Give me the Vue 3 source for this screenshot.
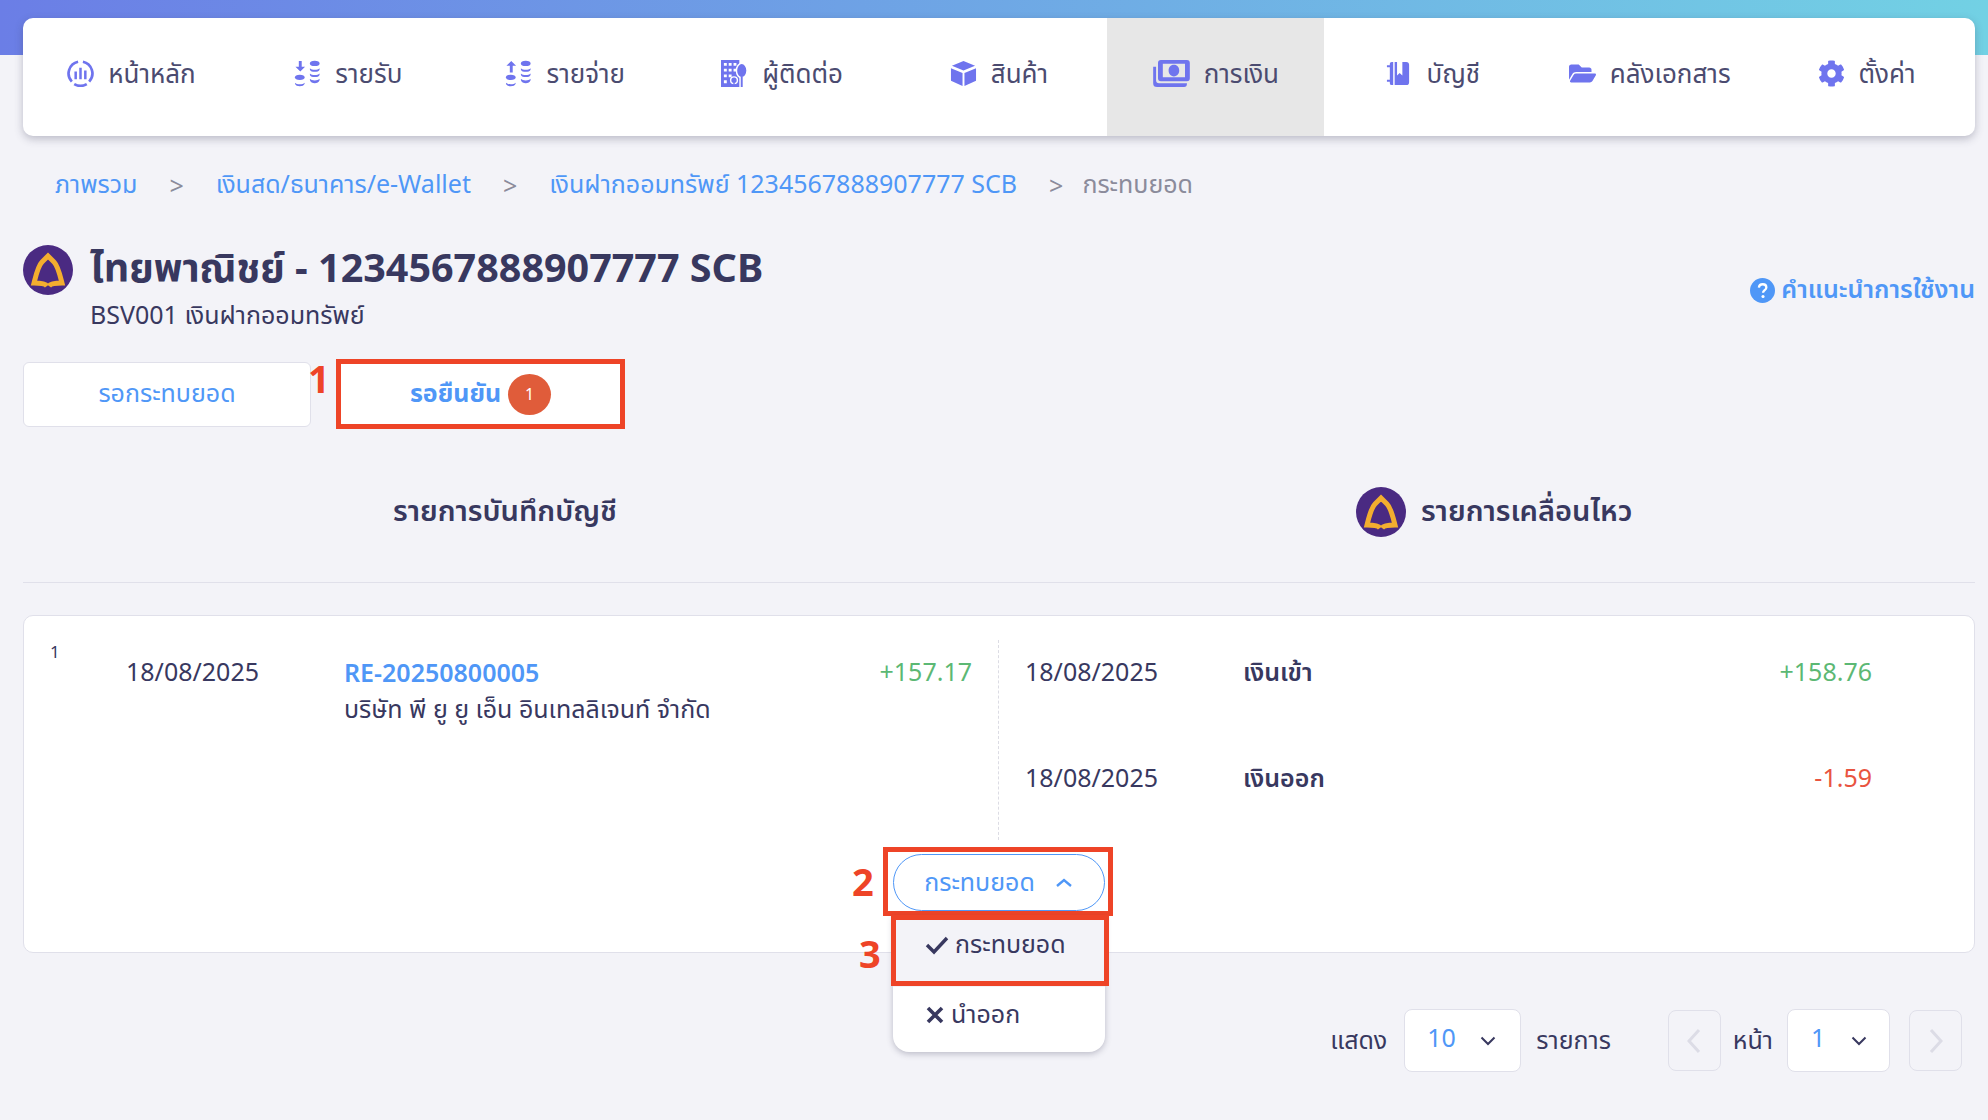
<script setup>
const menus = [
  { key: 'home', label: 'หน้าหลัก' },
  { key: 'income', label: 'รายรับ' },
  { key: 'expense', label: 'รายจ่าย' },
  { key: 'contact', label: 'ผู้ติดต่อ' },
  { key: 'product', label: 'สินค้า' },
  { key: 'finance', label: 'การเงิน', active: true },
  { key: 'account', label: 'บัญชี' },
  { key: 'docs', label: 'คลังเอกสาร' },
  { key: 'settings', label: 'ตั้งค่า' },
]

const crumbs = ['ภาพรวม', 'เงินสด/ธนาคาร/e-Wallet', 'เงินฝากออมทรัพย์ 1234567888907777 SCB']

const moves = [
  { date: '18/08/2025', label: 'เงินเข้า', amount: '+158.76', type: 'in' },
  { date: '18/08/2025', label: 'เงินออก', amount: '-1.59', type: 'out' },
]
</script>

<template>
  <div class="page">
    <!-- เมนูหลัก -->
    <nav class="nav">
      <a v-for="m in menus" :key="m.key" class="nav-item" :class="{ active: m.active }">
        <svg v-if="m.key === 'home'" class="nav-icon" viewBox="0 0 28 28" fill="none" stroke="#6f74ee">
          <path d="M5 22.500A12.500 12.500 0 0 1 11.500 1.800M16.500 1.800A12.500 12.500 0 0 1 23 22.500M7.500 25a13 13 0 0 0 13 0" stroke-width="2.800" />
          <path d="M9 12v8M14 8v12M19 11v9" stroke-width="2.600" />
        </svg>
        <svg v-else-if="m.key === 'income'" class="nav-icon" viewBox="0 0 28 28" fill="#6f74ee">
          <path d="M5 1h3v6h3.500L6.500 12 1.500 7H5z" />
          <ellipse cx="6" cy="18" rx="5" ry="2.800" />
          <path d="M1 23.500c2 2.200 8 2.200 10 0v1c-1 3.500-9 3.500-10 0z" />
          <ellipse cx="21.500" cy="3.500" rx="5" ry="2.800" />
          <path d="M16.500 8.500c2 2.200 8 2.200 10 0v1.500c-1 3-9 3-10 0zM16.500 14c2 2.200 8 2.200 10 0v1.500c-1 3-9 3-10 0zM16.500 19.500c2 2.200 8 2.200 10 0v1.500c-1 4-9 4-10 0z" />
        </svg>
        <svg v-else-if="m.key === 'expense'" class="nav-icon" viewBox="0 0 28 28" fill="#6f74ee">
          <path d="M5 13h3V6h3.500L6.500 1 1.500 6H5z" />
          <ellipse cx="6" cy="18" rx="5" ry="2.800" />
          <path d="M1 23.500c2 2.200 8 2.200 10 0v1c-1 3.500-9 3.500-10 0z" />
          <ellipse cx="21.500" cy="3.500" rx="5" ry="2.800" />
          <path d="M16.500 8.500c2 2.200 8 2.200 10 0v1.500c-1 3-9 3-10 0zM16.500 14c2 2.200 8 2.200 10 0v1.500c-1 3-9 3-10 0zM16.500 19.500c2 2.200 8 2.200 10 0v1.500c-1 4-9 4-10 0z" />
        </svg>
        <svg v-else-if="m.key === 'contact'" class="nav-icon" viewBox="0 0 28 28" fill="#6f74ee">
          <path fill-rule="evenodd" d="M0 0h19v28H0zM3 3v3h3V3zm5 0v3h3V3zm5 0v3h3V3zM3 9v3h3V9zm5 0v3h3V9zm5 0v3h3V9zM3 15v3h3v-3zm5 0v3h3v-3zM3 21v3h3v-3z" />
          <ellipse cx="21.500" cy="11" rx="5.500" ry="7.500" stroke="#fff" stroke-width="1.500" />
          <path d="M20.500 17h2v11h-2z" />
          <circle cx="13.500" cy="21" r="3.500" stroke="#fff" stroke-width="1.500" />
          <path d="M12.800 23h1.400v5h-1.400z" />
        </svg>
        <svg v-else-if="m.key === 'product'" class="nav-icon" viewBox="0 0 28 28" fill="#6f74ee">
          <path d="M14 1l12 5-12 5L2 6zM1 8.500l12 5V27L1 21.500zM27 8.500l-12 5V27l12-5.500z" />
        </svg>
        <svg v-else-if="m.key === 'finance'" class="nav-icon wide" viewBox="0 0 38 28" fill="#6f74ee">
          <path fill-rule="evenodd" d="M8 0h27a3 3 0 0 1 3 3v16a3 3 0 0 1-3 3H8a3 3 0 0 1-3-3V3a3 3 0 0 1 3-3zm2 4v14h23V4zm11.500 1c3.500 0 5.500 2.700 5.500 6s-2 6-5.500 6-5.500-2.700-5.500-6 2-6 5.500-6z" />
          <path d="M0 7h3v14a3 3 0 0 0 3 3h29v1a3 3 0 0 1-3 3H4a4 4 0 0 1-4-4z" />
        </svg>
        <svg v-else-if="m.key === 'account'" class="nav-icon" viewBox="-2 -2 28 28" fill="#6f74ee">
          <path fill-rule="evenodd" d="M8 0h12a3 3 0 0 1 3 3v18a3 3 0 0 1-3 3H8zm2.500 0v14l2.700-2.500L16 14V0z" />
          <path d="M6.500 0v24H5a2 2 0 0 1-2-2v-1.500H0v-2h3v-13H0v-2h3V2a2 2 0 0 1 2-2z" />
        </svg>
        <svg v-else-if="m.key === 'docs'" class="nav-icon" viewBox="0 0 576 512" fill="#6f74ee">
          <path d="M572.694 292.093L500.27 416.248A63.997 63.997 0 0 1 444.989 448H45.025c-18.523 0-30.064-20.093-20.731-36.093l72.424-124.155A64 64 0 0 1 152 256h399.964c18.523 0 30.064 20.093 20.73 36.093zM152 224h328v-48c0-26.51-21.49-48-48-48H272l-64-64H48C21.49 64 0 85.49 0 112v278.046l69.077-118.418C86.214 242.25 117.989 224 152 224z" />
        </svg>
        <svg v-else class="nav-icon" viewBox="0 0 512 512" fill="#6f74ee">
          <path d="M487.4 315.7l-42.6-24.6c4.3-23.2 4.3-47 0-70.2l42.6-24.6c4.9-2.8 7.1-8.6 5.5-14-11.1-35.6-30-67.8-54.7-94.6-3.8-4.1-10-5.1-14.8-2.3L380.8 110c-17.9-15.4-38.5-27.3-60.8-35.1V25.8c0-5.6-3.9-10.5-9.4-11.7-36.7-8.2-74.3-7.8-109.2 0-5.5 1.2-9.4 6.1-9.4 11.7V75c-22.2 7.9-42.8 19.8-60.8 35.1L88.7 85.5c-4.9-2.8-11-1.9-14.8 2.3-24.7 26.7-43.6 58.9-54.7 94.6-1.7 5.4.6 11.2 5.5 14L67.3 221c-4.3 23.2-4.3 47 0 70.2l-42.6 24.6c-4.9 2.8-7.1 8.6-5.5 14 11.1 35.6 30 67.8 54.7 94.6 3.8 4.1 10 5.1 14.8 2.3l42.6-24.6c17.9 15.4 38.5 27.3 60.8 35.1v49.2c0 5.6 3.9 10.5 9.4 11.7 36.7 8.2 74.3 7.8 109.2 0 5.5-1.2 9.4-6.1 9.4-11.7v-49.2c22.2-7.9 42.8-19.8 60.8-35.1l42.6 24.6c4.9 2.8 11 1.9 14.8-2.3 24.7-26.7 43.6-58.9 54.7-94.6 1.5-5.5-.7-11.3-5.6-14.1zM256 336c-44.1 0-80-35.9-80-80s35.9-80 80-80 80 35.9 80 80-35.9 80-80 80z" />
        </svg>
        <span>{{ m.label }}</span>
      </a>
    </nav>

    <!-- breadcrumb -->
    <div class="crumbs">
      <template v-for="c in crumbs" :key="c">
        <a class="crumb-link">{{ c }}</a>
        <span class="crumb-sep">&gt;</span>
      </template>
      <span class="crumb-now">กระทบยอด</span>
    </div>

    <!-- หัวข้อบัญชี -->
    <header class="head">
      <svg class="bank-logo" viewBox="0 0 50 50">
        <circle cx="25" cy="25" r="25" fill="#4a2a82" />
        <path d="M24 41C22 38 16 38 11 38 13 30 15 21 19 17L25 11 31 17C35 21 37 30 39 38 34 38 28 38 26 41" fill="none" stroke="#f3ae2f" stroke-width="5" />
      </svg>
      <div class="head-text">
        <h1>ไทยพาณิชย์ - 1234567888907777 SCB</h1>
        <p>BSV001 เงินฝากออมทรัพย์</p>
      </div>
      <a class="help">
        <svg viewBox="0 0 24 24" class="help-icon">
          <circle cx="12" cy="12" r="12" fill="#4f97f7" />
          <path d="M8.500 9.300c.2-2 1.700-3.300 3.700-3.300s3.500 1.200 3.500 3c0 2.600-3.200 2.700-3.200 5.200" fill="none" stroke="#fff" stroke-width="2.200" />
          <circle cx="12.500" cy="17.700" r="1.500" fill="#fff" />
        </svg>
        คำแนะนำการใช้งาน
      </a>
    </header>

    <!-- แท็บ -->
    <div class="tabs">
      <button class="tab">รอกระทบยอด</button>
      <span class="step step-1">1</span>
      <button class="tab tab-on">
        รอยืนยัน
        <span class="tab-badge">1</span>
      </button>
    </div>

    <div class="columns">
      <div class="col-title col-left">รายการบันทึกบัญชี</div>
      <div class="col-title col-right">
        <svg class="bank-logo" viewBox="0 0 50 50">
          <circle cx="25" cy="25" r="25" fill="#4a2a82" />
          <path d="M24 41C22 38 16 38 11 38 13 30 15 21 19 17L25 11 31 17C35 21 37 30 39 38 34 38 28 38 26 41" fill="none" stroke="#f3ae2f" stroke-width="5" />
        </svg>
        รายการเคลื่อนไหว
      </div>
    </div>

    <!-- รายการ -->
    <section class="card">
      <div class="row">
        <div class="row-left">
          <span class="row-no">1</span>
          <span class="row-date">18/08/2025</span>
          <div class="row-doc">
            <a class="doc-no">RE-20250800005</a>
            <div class="doc-name">บริษัท พี ยู ยู เอ็น อินเทลลิเจนท์ จำกัด</div>
          </div>
          <span class="amount in">+157.17</span>
        </div>
        <div class="row-right">
          <div v-for="mv in moves" :key="mv.label" class="move">
            <span class="move-date">{{ mv.date }}</span>
            <span class="move-label">{{ mv.label }}</span>
            <span class="amount" :class="mv.type">{{ mv.amount }}</span>
          </div>
        </div>
      </div>
      <div class="action">
        <button class="action-btn">
          กระทบยอด
          <svg viewBox="0 0 18 10" class="action-caret"><path d="M2 8l7-6 7 6" fill="none" stroke="#4f97f7" stroke-width="2.400" /></svg>
        </button>
        <span class="mark mark-btn"></span>
        <span class="step step-2">2</span>
        <span class="step step-3">3</span>
        <!-- dropdown -->
        <div class="menu">
          <div class="menu-item menu-on">
            <svg viewBox="0 0 24 20" class="menu-icon check"><path d="M2 10l7 7L22 3" fill="none" stroke="#38385f" stroke-width="3.400" /></svg>
            กระทบยอด
            <span class="mark mark-item"></span>
          </div>
          <div class="menu-item menu-off">
            <svg viewBox="0 0 20 20" class="menu-icon cross"><path d="M3 3l14 14M17 3L3 17" fill="none" stroke="#38385f" stroke-width="3.600" /></svg>
            นำออก
          </div>
        </div>
      </div>
    </section>

    <!-- เลขหน้า -->
    <footer class="pager">
      <span>แสดง</span>
      <div class="select size-select">
        <b>10</b>
        <svg viewBox="0 0 16 10"><path d="M1.500 1.500L8 8l6.500-6.500" fill="none" stroke="#38385f" stroke-width="2" /></svg>
      </div>
      <span class="pager-unit">รายการ</span>
      <button class="page-arrow">
        <svg viewBox="0 0 14 26"><path d="M12 2L2 13l10 11" fill="none" stroke="#dcdce6" stroke-width="3" /></svg>
      </button>
      <span class="pager-page">หน้า</span>
      <div class="select page-select">
        <b>1</b>
        <svg viewBox="0 0 16 10"><path d="M1.500 1.500L8 8l6.500-6.500" fill="none" stroke="#38385f" stroke-width="2" /></svg>
      </div>
      <button class="page-arrow next">
        <svg viewBox="0 0 14 26"><path d="M2 2l10 11L2 24" fill="none" stroke="#dcdce6" stroke-width="3" /></svg>
      </button>
    </footer>
  </div>
</template>

<style>
html,
body {
  margin: 0;
  background: #f3f3f8;
}
</style>

<style scoped>
.page {
  box-sizing: border-box;
  width: 1988px;
  height: 1120px;
  padding: 18px 13px 0 23px;
  overflow: hidden;
  background: #f3f3f8 linear-gradient(90deg, #6b7ee6, #72d1e4) no-repeat;
  background-size: 100% 55px;
  font-family: "Noto Sans", "Noto Sans Thai", "Liberation Sans", sans-serif;
  font-size: 25px;
  color: #38385f;
}

/* ==================== NAV ==================== */
.nav {
  display: grid;
  grid-template-columns: repeat(9, 1fr);
  height: 118px;
  background: #fff;
  border-radius: 10px;
  box-shadow: 0 3px 8px rgba(60, 60, 90, 0.3);
  overflow: hidden;
}

.nav-item {
  display: flex;
  align-items: center;
  justify-content: center;
  gap: 14px;
  padding-bottom: 4px;
  color: #4b4b70;
  font-size: 26px;
}

.nav-item.active {
  background: #e7e7e7;
}

.nav-icon {
  width: 27px;
  height: 27px;
  flex: none;
  margin-top: -4px;
}

.nav-icon.wide {
  width: 37px;
}

/* ==================== CRUMBS ==================== */
.crumbs {
  display: flex;
  align-items: center;
  gap: 32px;
  height: 34px;
  margin-top: 32px;
  padding-left: 32px;
}

.crumb-link {
  color: #4f97f7;
}

.crumb-sep,
.crumb-now {
  color: #8b8b9b;
}

.crumb-now {
  margin-left: -13px;
}

/* ==================== HEAD ==================== */
.head {
  display: flex;
  align-items: flex-start;
  margin-top: 43px;
}

.bank-logo {
  width: 50px;
  height: 50px;
  flex: none;
}

.head-text {
  margin-left: 17px;
}

.head h1 {
  margin: -3px 0 0;
  font-size: 39.5px;
  line-height: 50px;
  font-weight: 700;
}

.head p {
  margin: 5px 0 0;
  line-height: 34px;
}

.help {
  display: flex;
  align-items: center;
  gap: 6px;
  margin: 26px 0 0 auto;
  color: #4f97f7;
  font-weight: 600;
}

.help-icon {
  width: 25px;
  height: 25px;
}

/* ==================== TABS ==================== */
.tabs {
  display: flex;
  position: relative;
  align-items: center;
  gap: 25px;
  margin-top: 28px;
}

.tab {
  width: 288px;
  height: 65px;
  border: 1px solid #e0e0ea;
  border-radius: 6px;
  background: #fff;
  color: #4f97f7;
  font: inherit;
}

.tab-on {
  display: flex;
  align-items: center;
  justify-content: center;
  gap: 7px;
  box-sizing: border-box;
  width: 289px;
  height: 70px;
  border: 5px solid #ee4427;
  border-radius: 0;
  font-weight: 700;
}

.tab-badge {
  display: inline-flex;
  align-items: center;
  justify-content: center;
  width: 43px;
  height: 41px;
  border-radius: 50%;
  background: #e05c3a;
  color: #fff;
  font-size: 16px;
  font-weight: 400;
}

.step {
  position: absolute;
  color: #ee4427;
  font-size: 38px;
  font-weight: 700;
  line-height: 1;
}

.step-1 {
  left: 285px;
  top: 0;
}

/* ==================== COLUMNS ==================== */
.columns {
  display: flex;
  align-items: center;
  box-sizing: border-box;
  height: 154px;
  padding-top: 12px;
  border-bottom: 1px solid #e0e0ea;
}

.col-title {
  display: flex;
  align-items: center;
  gap: 15px;
  font-size: 29px;
  font-weight: 600;
}

.col-left {
  margin-left: 370px;
}

.col-right {
  margin-left: 739px;
}

/* ==================== CARD ==================== */
.card {
  box-sizing: border-box;
  height: 338px;
  margin-top: 32px;
  padding-top: 24px;
  background: #fff;
  border: 1px solid #e0e0ea;
  border-radius: 10px;
}

.row {
  display: flex;
  height: 200px;
}

.row-left {
  display: flex;
  align-items: flex-start;
  width: 974px;
  border-right: 1px dashed #dcdce4;
}

.row-no {
  width: 76px;
  margin: 0 0 0 26px;
  font-size: 17px;
  line-height: 24px;
}

.row-date {
  width: 218px;
  margin-top: 14px;
  line-height: 34px;
}

.row-doc {
  flex: 1;
  margin-top: 15px;
  line-height: 34px;
}

.doc-no {
  color: #4f97f7;
  font-weight: 600;
}

.doc-name {
  margin-top: 2px;
}

.amount {
  margin-top: 14px;
  margin-right: 26px;
  line-height: 34px;
}

.amount.in {
  color: #5cb874;
}

.amount.out {
  color: #e9543f;
}

.row-right {
  flex: 1;
  padding: 14px 0 0 26px;
}

.move {
  display: flex;
  align-items: flex-start;
  height: 106px;
  line-height: 34px;
}

.move-date {
  width: 218px;
}

.move-label {
  flex: 1;
  font-weight: 600;
}

.move .amount {
  margin: 0 102px 0 0;
}

/* ==================== ACTION ==================== */
.action {
  position: relative;
  display: flex;
  justify-content: center;
  margin: 14px 0 0 -1px;
}

.action-btn {
  display: flex;
  align-items: center;
  justify-content: center;
  gap: 20px;
  width: 212px;
  height: 57px;
  border: 1px solid #4f97f7;
  border-radius: 29px;
  background: #fff;
  color: #4f97f7;
  font: inherit;
}

.action-caret {
  width: 18px;
  height: 10px;
}

.mark {
  position: absolute;
  box-sizing: border-box;
  border: 5px solid #ee4427;
  pointer-events: none;
}

.mark-btn {
  left: 860px;
  top: -7px;
  width: 230px;
  height: 69px;
}

.step-2 {
  left: 829px;
  top: 8px;
}

.step-3 {
  left: 836px;
  top: 80px;
}

.menu {
  position: absolute;
  left: 870px;
  top: 62px;
  width: 212px;
  height: 136px;
  background: #fff;
  border-radius: 0 0 16px 16px;
  box-shadow: 0 2px 6px rgba(60, 60, 90, 0.3);
}

.menu-item {
  position: relative;
  display: flex;
  align-items: center;
  box-sizing: border-box;
  padding-left: 32px;
}

.menu-on {
  height: 71px;
  gap: 6px;
  padding-bottom: 14px;
  background: #f3f3f8;
}

.menu-off {
  height: 65px;
  gap: 6px;
  padding-bottom: 9px;
}

.menu-icon.check {
  width: 24px;
  height: 20px;
}

.menu-icon.cross {
  width: 20px;
  height: 20px;
}

.mark-item {
  left: -2px;
  top: -1px;
  width: 218px;
  height: 71px;
}

/* ==================== PAGER ==================== */
.pager {
  display: flex;
  align-items: center;
  justify-content: flex-end;
  height: 63px;
  margin: 56px -1px 0 0;
  padding-right: 14px;
}

.select {
  display: flex;
  align-items: center;
  box-sizing: border-box;
  height: 63px;
  margin-left: 17px;
  padding-left: 22px;
  background: #fff;
  border: 1px solid #e0e0ea;
  border-radius: 8px;
}

.select b {
  flex: 1;
  margin-top: -8px;
  color: #4f97f7;
  font-weight: 400;
}

.select svg {
  width: 16px;
  height: 10px;
  margin-right: 22px;
}

.size-select {
  width: 117px;
}

.size-select svg {
  margin-right: 24px;
}

.page-select {
  width: 103px;
  margin-left: 14px;
  padding-left: 23px;
}

.pager-unit {
  margin-left: 15px;
}

.page-arrow {
  width: 53px;
  height: 61px;
  margin-left: 57px;
  padding: 0;
  background: transparent;
  border: 1px solid #e0e0ea;
  border-radius: 8px;
}

.page-arrow.next {
  margin-left: 19px;
}

.page-arrow svg {
  width: 14px;
  height: 26px;
  display: block;
  margin: auto;
}

.pager-page {
  margin-left: 12px;
}
</style>
